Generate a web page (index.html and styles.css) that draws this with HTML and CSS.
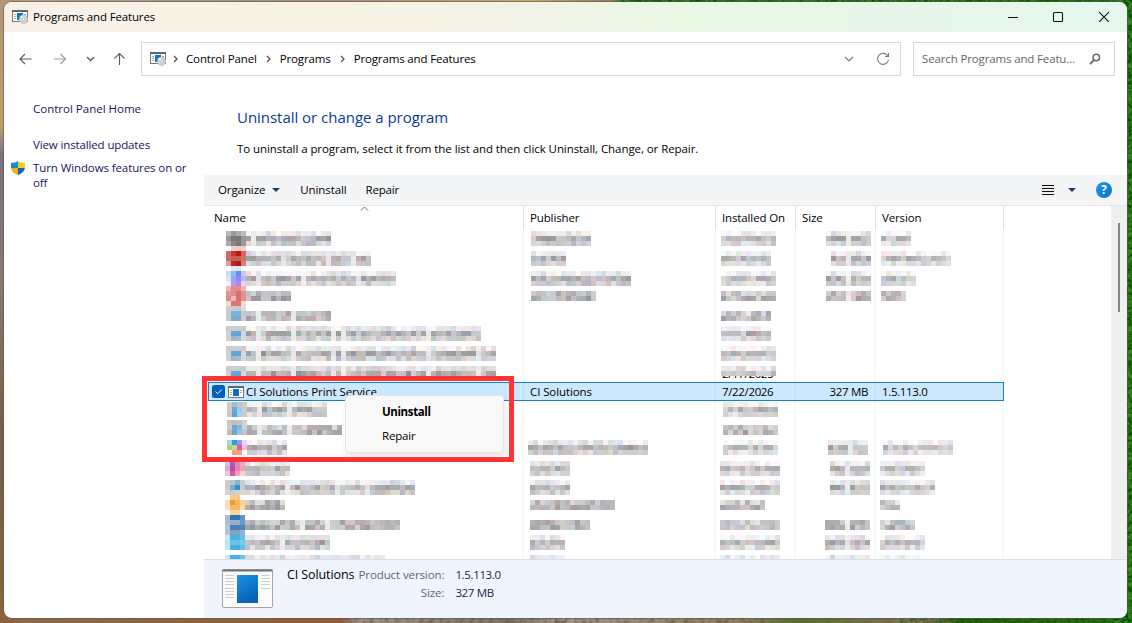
FILE: index.html
```html
<!DOCTYPE html>
<html lang="en">
<head>
<meta charset="utf-8">
<title>Programs and Features</title>
<link rel="stylesheet" href="styles.css">
</head>
<body>
<svg class="defs" width="0" height="0">
  <defs>
    <linearGradient id="blue" x1="0" y1="0" x2="0.4" y2="1"><stop offset="0" stop-color="#1b93e3"/><stop offset="1" stop-color="#0562b8"/></linearGradient>
    <symbol id="programs" viewBox="0 0 16 14">
      <rect x="0.5" y="0.5" width="15" height="11" fill="#fafafa" stroke="#777a7a"/>
      <path d="M0 1h16" stroke="#626666" stroke-width="2"/>
      <path d="M2 4.5h2M2 6.5h2M2 8.5h2M12 4.5h2" stroke="#aaa"/>
      <rect x="5" y="3" width="6" height="7" fill="#0b78cf"/>
      <circle cx="11.5" cy="9.3" r="4.3" fill="#cfd2d4" stroke="#aeb2b5" stroke-width=".5"/>
      <path d="M11.5 9.3L8 7.3A4 4 0 0 1 10.5 5.2z" fill="#f4f4f4"/>
      <circle cx="11.5" cy="9.3" r="1.2" fill="#fff" stroke="#999" stroke-width=".5"/>
    </symbol>
  </defs>
</svg>
<svg class="wallpaper" width="1132" height="623">
  <defs>
    <linearGradient id="ground" x1="0" x2="1"><stop offset="0" stop-color="#8b6b49"/><stop offset=".3" stop-color="#8f5d33"/><stop offset=".32" stop-color="#a0948a"/><stop offset=".45" stop-color="#7d7166"/><stop offset=".5" stop-color="#a2948a"/><stop offset=".66" stop-color="#8c7c5c"/><stop offset=".7" stop-color="#53712a"/><stop offset=".82" stop-color="#8d7358"/><stop offset=".85" stop-color="#2c6210"/><stop offset="1" stop-color="#2f7310"/></linearGradient>
    <linearGradient id="sky" x1="0" x2="1"><stop offset="0" stop-color="#bd9c83"/><stop offset=".15" stop-color="#a79685"/><stop offset=".3" stop-color="#a98f7d"/><stop offset=".47" stop-color="#caa46a"/><stop offset=".54" stop-color="#8d7f68"/><stop offset=".55" stop-color="#3d7c28"/><stop offset="1" stop-color="#2c761f"/></linearGradient>
    <linearGradient id="rock" x1="0" x2="0" y1="0" y2="1"><stop offset="0" stop-color="#b49575"/><stop offset=".2" stop-color="#c39c72"/><stop offset=".25" stop-color="#7b7180"/><stop offset=".45" stop-color="#8a7a70"/><stop offset=".7" stop-color="#7a5d45"/><stop offset="1" stop-color="#8c633e"/></linearGradient>
    <filter id="grain" x="0" y="0" width="100%" height="100%"><feTurbulence type="fractalNoise" baseFrequency="0.28" numOctaves="3" seed="4"/><feColorMatrix values="0 0 0 0 0  0 0 0 0 0.08  0 0 0 0 0  2.6 0 0 0 -0.9"/></filter>
    <filter id="dust" x="0" y="0" width="100%" height="100%"><feTurbulence type="fractalNoise" baseFrequency="0.2" numOctaves="3" seed="9"/><feColorMatrix values="0 0 0 0 0.15  0 0 0 0 0.1  0 0 0 0 0.05  2 0 0 0 -0.8"/></filter>
  </defs>
  <rect width="1132" height="10" fill="url(#sky)"/>
  <rect y="605" width="1132" height="18" fill="url(#ground)"/>
  <rect width="20" height="623" fill="url(#rock)"/>
  <rect x="1115" width="17" height="623" fill="#3c8420"/>
  <rect x="1115" width="17" height="623" filter="url(#grain)"/>
  <rect x="620" width="512" height="8" filter="url(#grain)"/>
  <rect x="340" y="612" width="560" height="11" filter="url(#dust)"/>
  <rect x="900" y="612" width="232" height="11" filter="url(#grain)" opacity=".7"/>
</svg>

<div class="window">
  <header class="titlebar">
    <svg class="app-icon" width="16" height="14"><use href="#programs"/></svg>
    <span class="title">Programs and Features</span>
    <svg class="caption" width="104" height="12" fill="none" stroke="#111" stroke-width="1.1"><path d="M0 6.5h10"/><rect x="45.5" y="1.5" width="9" height="9" rx="1"/><path d="M91.2 1.2l9.6 9.6M100.8 1.2l-9.6 9.6"/></svg>
  </header>

  <nav class="navbar">
    <svg class="arrows" width="108" height="14" fill="none" stroke="#5c5c5c" stroke-width="1.15"><path d="M12.5 7H1M6 2L1 7l5 5"/><path stroke="#9c9c9c" d="M35 7h11.5M41.500 2l5 5-5 5"/><path stroke-width="1.4" d="M68 5l3.600 3.600L75.200 5"/><path d="M100.500 13V1.500M95.300 6.700l5.200-5.200 5.200 5.200"/></svg>
    <div class="address">
      <svg width="16" height="14"><use href="#programs"/></svg>
      <svg class="chev" width="5" height="8"><path d="M1 1l3 3-3 3"/></svg><span>Control Panel</span>
      <svg class="chev" width="5" height="8"><path d="M1 1l3 3-3 3"/></svg><span>Programs</span>
      <svg class="chev" width="5" height="8"><path d="M1 1l3 3-3 3"/></svg><span>Programs and Features</span>
      <svg class="reload" width="46" height="14" fill="none" stroke="#7a7a7a" stroke-width="1.1"><path d="M1 5l4 4 4-4"/><path d="M44 4.300A5.500 5.500 0 1 0 44.500 8M44.500 1v3.500H41"/></svg>
    </div>
    <div class="search">
      <span>Search Programs and Featu...</span>
      <svg width="12" height="12" fill="none" stroke="#707070"><circle cx="7.300" cy="4.500" r="3.200" stroke-width="1.600"/><path d="M5 7L1 11" stroke-width="2"/></svg>
    </div>
  </nav>

  <div class="content">
    <aside class="sidebar">
      <a class="home">Control Panel Home</a>
      <a class="updates">View installed updates</a>
      <div class="feature">
        <svg width="14" height="14" viewBox="0 0 14 14"><clipPath id="sh"><path d="M7 0C5.200 1.500 2.500 1.800 0 1.900V6c0 4 3.500 6.600 7 8 3.500-1.400 7-4 7-8V1.900C11.500 1.800 8.800 1.500 7 0z"/></clipPath><g clip-path="url(#sh)"><path fill="#168ad8" d="M0 0h7v7H0z"/><path fill="#fccb0a" d="M7 0h7v7H7z"/><path fill="#f5ae08" d="M0 7h7v7H0z"/><path fill="#1169bd" d="M7 7h7v7H7z"/></g></svg>
        <a>Turn Windows features on or off</a>
      </div>
    </aside>
    <main class="main">
      <h1>Uninstall or change a program</h1>
      <p class="hint">To uninstall a program, select it from the list and then click Uninstall, Change, or Repair.</p>
      <div class="toolbar">
        <span>Organize</span><svg class="drop" width="8" height="4"><path d="M0 0h8L4 4z" fill="#1c3f6e"/></svg>
        <span class="cmd">Uninstall</span><span class="cmd2">Repair</span>
        <svg class="view" width="14" height="12"><rect width="14" height="12" fill="#efefef"/><path d="M1 1.500h12M1 4.500h12M1 7.500h12M1 10.500h12" stroke="#111"/></svg>
        <svg class="drop2" width="8" height="4"><path d="M0 0h8L4 4z" fill="#14396e"/></svg>
        <b class="help">?</b>
      </div>
      <section class="listing">
        <div class="table">
          <div class="head">
            <span class="c-name">Name<svg class="sort" width="9" height="5" fill="none" stroke="#6a6a6a"><path d="M1 4.500L4.500 1 8 4.500"/></svg></span><span>Publisher</span><span>Installed On</span><span>Size</span><span>Version</span>
          </div>
          <div class="rows" id="rows">
            <div class="row selected" id="selected">
              <div class="c-name">
                <svg width="13" height="13"><rect width="13" height="13" rx="2.500" fill="#005fb8"/><path d="M3.500 6.500l2.200 2.200 4-4.200" fill="none" stroke="#fff"/></svg>
                <svg class="item-icon" width="16" height="12"><rect x=".5" y=".5" width="15" height="11" fill="#fff" stroke="#777"/><path d="M0 1h16" stroke="#666" stroke-width="2"/><path d="M2 4.500h2M2 6.500h2M2 8.500h2M12 4.500h2M12 6.500h2" stroke="#aaa"/><rect x="5" y="3" width="6" height="7" fill="#0b72c9"/></svg>
                <span>CI Solutions Print Service</span>
              </div>
              <span>CI Solutions</span><span class="num">7/22/2026</span><span class="num size">327 MB</span><span class="num">1.5.113.0</span>
            </div>
          </div>
        </div>
        <div class="scrollbar"><div class="thumb"></div></div>
        <div class="menu"><b>Uninstall</b><span>Repair</span></div>
      </section>
      <footer class="details">
        <svg class="big" width="52" height="40"><rect x=".5" y=".5" width="50" height="38" rx="1.500" fill="#fbfbfb" stroke="#a3a5a6"/><path d="M.5 1.500h50" stroke="#707570" stroke-width="2"/><path d="M3 6.500h9M3 9.500h9M3 12.500h9M3 15.500h9M3 19.500h9M3 22.500h9M3 25.500h9M3 28.500h9M39 6.500h9M39 9.500h9M39 12.500h9M39 15.500h9M39 19.500h9" stroke="#cfcfcf"/><rect x="15" y="6" width="21" height="28" fill="url(#blue)"/></svg>
        <span class="vendor">CI Solutions</span>
        <dl><dt>Product version:</dt><dd>1.5.113.0</dd><dt>Size:</dt><dd>327 MB</dd></dl>
      </footer>
    </main>
  </div>
  <div class="highlight"></div>
</div>
<script src="rows.js"></script>
</body>
</html>
```
FILE: styles.css
```css
* { box-sizing: border-box; }
body {
  margin: 0; width: 1132px; height: 623px; overflow: hidden; position: relative;
  padding: 2px 0 0 4px; background: #7d6a55; color: #000;
  font: 11.5px/15px "Open Sans", "Noto Sans", sans-serif; letter-spacing: -0.1px;
}
svg { display: block; flex: none; }
.defs { position: absolute; }
.wallpaper { position: absolute; left: 0; top: 0; }
.window {
  position: relative; width: 1123px; height: 616px; border-radius: 8px; overflow: hidden;
  background: #fff; display: flex; flex-direction: column; box-shadow: 0 0 0 1px rgba(90, 85, 80, .55);
}

.titlebar {
  height: 30px; display: flex; align-items: center; padding: 0 18px 0 8px;
  background: linear-gradient(90deg, #f8f1e7 0, #f7f2e6 36%, #f1f3e6 47%, #e9f8e5 62%, #e7f5e8 78%, #e5f7ed 100%);
}
.title { margin-left: 5px; padding-bottom: 2px; letter-spacing: -0.14px; }
.caption { margin-left: auto; margin-right: -3px; }

.navbar { height: 54px; display: flex; align-items: center; padding: 0 12px 0 15px; }
.address { width: 760px; height: 34px; margin-left: 14px; border: 1px solid #d9d9d9; display: flex; align-items: center; padding: 0 10px 0 8px; }
.chev { fill: none; stroke: #555; stroke-width: 1.3; margin: 0 8px 0 9px; }
.chev:nth-of-type(2) { margin-left: 7px; }
.chev ~ .chev { margin-left: 9px; margin-right: 9px; }
.address span { padding-bottom: 2px; letter-spacing: -0.14px; }
.reload { margin-left: auto; }
.search { flex: none; margin-left: 12px; width: 202px; height: 34px; border: 1px solid #d9d9d9; display: flex; align-items: center; justify-content: space-between; padding: 0 13px 0 8px; color: #666; letter-spacing: -0.14px; }
.search span { padding-bottom: 2px; }

.content { flex: 1; display: flex; min-height: 0; }
.sidebar { width: 200px; padding: 15px 10px 0 29px; color: #151560; letter-spacing: -0.1px; }
.sidebar a { display: block; }
.home { letter-spacing: 0; margin-bottom: 21px; }
.updates { margin-bottom: 8px; letter-spacing: -0.13px; }
.feature { display: flex; gap: 8px; margin-left: -22px; }
.feature svg { margin-top: 1px; }
.feature a { width: 160px; }

.main { flex: 1; display: flex; flex-direction: column; min-width: 0; }
h1 { margin: 21px 0 0 33px; font: 15px/21px "Open Sans", sans-serif; letter-spacing: -0.03px; color: #0a3a9c; }
.hint { margin: 13px 0 19px 33px; line-height: 15px; letter-spacing: -0.07px; }
.toolbar { height: 31px; background: #f4f5f7; border-bottom: 1px solid #e5e5e6; display: flex; align-items: center; padding: 0 15px 0 14px; }
.toolbar span { padding-bottom: 2px; }
.drop { margin-left: 7px; }
.cmd { margin-left: 20px; }
.cmd2 { margin-left: 19px; letter-spacing: -0.2px; }
.view { margin-left: auto; }
.drop2 { margin: 0 20px 0 13px; }
.help { width: 16px; height: 16px; border-radius: 50%; background: linear-gradient(135deg, #229be8, #0671cd); color: #fff; line-height: 16px; text-align: center; }

.listing { position: relative; flex: none; width: 923px; height: 353px; display: flex; justify-content: space-between; overflow: hidden; }
.table { width: 800px; }
.head, .row { display: grid; grid-template-columns: 320px 192px 80px 80px 128px; }
.head { height: 24px; line-height: 24px; }
.head span { padding-left: 6px; border-right: 1px solid #e3e3e3; letter-spacing: -0.13px; }
.head .c-name { padding-left: 10px; position: relative; letter-spacing: -0.04px; }
.sort { position: absolute; left: 156px; top: 0; }
.row { height: 19px; }
.row > * { border-right: 1px solid #eef5fb; }
.mosaic { overflow: visible; }
.mosaic text { font-size: 11.5px; letter-spacing: -0.35px; }
.selected { margin-left: 4px; grid-template-columns: 316px 192px 80px 80px 128px; background: #cce8ff; box-shadow: inset 0 0 0 1px #1580d3; }
.selected > * { border-right-color: #b9dff9; padding-left: 6px; height: 17px; margin-top: 1px; line-height: 17px; }
.selected > :last-child { border-right-color: #1580d3; }
.selected .c-name { display: flex; align-items: center; padding-left: 4px; letter-spacing: -0.07px; }
.item-icon { margin: 0 2px 0 3px; }
.num { letter-spacing: -0.35px; }
.size { text-align: right; padding-right: 7px; }
.scrollbar { width: 16px; background: #efefef; padding: 17px 0 0 7px; }
.thumb { width: 2px; height: 89px; background: #858585; }

.menu { position: absolute; left: 141px; top: 189px; width: 159px; height: 58px; background: #f9f9f9; border: 1px solid #e6e6e6; border-radius: 4px; box-shadow: 2px 5px 9px rgba(0, 0, 0, .10); display: flex; flex-direction: column; padding: 4px 0 0 36px; line-height: 24px; }
.menu b { letter-spacing: -0.38px; }
.menu span { letter-spacing: -0.2px; }
.highlight { position: absolute; left: 198px; top: 374px; width: 312px; height: 86px; border: 5px solid #ff3434; }

.details { flex: 1; background: #f0f4fc; border-top: 1px solid #d3dfef; display: flex; padding: 9px 0 0 18px; }
.vendor { margin: -3px 0 0 13px; font-size: 12.5px; line-height: 17px; letter-spacing: -0.1px; }
dl { margin: -3px 0 0 4px; display: grid; grid-template-columns: 86px auto; column-gap: 11px; grid-auto-rows: 18px; align-content: start; line-height: 18px; }
dt { text-align: right; color: #5e6678; }
dd { margin: 0; color: #1c2844; letter-spacing: -0.35px; }
```
FILE: rows.js
```js
// Redacted entries, drawn as mosaics of 5px tiles.
// dx: tile grid shift, y: first tile line inside the row, n: tile lines,
// name / pub / date / ver: right edges, size: left edge, gaps: word breaks in the name,
// icon: tile colours, peek: value whose lower edge shows below the mosaic.
const blueIcon = ['ccc c8d0d4 c8d0d4 ccc', 'd0d0d0 62a8d8 5fa6d8 d6d6d6', 'd0d0d0 9bb8cf a2bdd4 d8d8d8'];
const entries = [
  {y:1,n:3,name:331,pub:591,date:776,size:826,ver:911,gaps:[251],icon:['bbb 999 aaa bbb','999 777 777 999','aaa 888 777 999']},
  {y:-3,n:4,name:371,pub:566,date:771,size:831,ver:951,skip:1,gaps:[281,326,351],icon:['fff f2cfcf f0caca f2d2d2','d06a66 c43830 b81a14 d46a64','d06a66 c8605a c8605a d46a64','dc9c98 b82820 b01a16 dc7c78']},
  {y:-2,n:4,name:396,pub:631,date:776,size:826,ver:916,skip:1,gaps:[256,301,356],icon:['fff e0e8fc dce6fc fff','c4e0f8 8abcf8 6a88f4 c8c8f8','d4e8fc 98a4f8 9488f4 bcb4f4','f4f4fc b09cf8 a48cf0 e0d8fc']},
  {y:-1,n:4,name:291,pub:596,date:776,size:826,ver:906,skip:1,dense:1,icon:['f4b4b4 e88c88 e88c88 f4b4b0','e49490 e08c88 d8706c e09490','e08c88 ecb8b4 d8706c e4908c','f8d8d8 e07470 dc7470 f8d8d4']},
  {y:0,n:3,name:331,date:771,skip:1,dense:1,gaps:[256,291],icon:['ccc ccc c8c8c8 ddd','c4ccd0 78b4e0 78b4e0 ccc','c8ccd0 84a8c8 84a8c8 ccc']},
  {y:1,n:3,name:481,date:771,gaps:[256,291,331,341,426],icon:blueIcon},
  {y:2,n:3,name:496,date:776,gaps:[256,291,331,341,426,476],icon:blueIcon},
  {y:3,n:2,name:496,date:776,gaps:[256,291,331,341,426,476],icon:blueIcon,peek:'2/17/2025'},
  null,
  {dx:1,y:1,n:3,name:327,date:778,gaps:[257,287],icon:['ccc a4bccc b4c8d8 ccc','ccc 6ca8d8 9cccf0 ccc','c8c8c8 5ca4dc a4d0f0 ccc']},
  {dx:1,y:0,n:3,name:340,date:778,skip:1,dense:1,gaps:[257,287],icon:['c4c4c4 c0c0c0 c4c4c4 d4d4d4','ccc 6cacdc 7cb8e8 c8d4dc','bbb 78a4c4 98c4e0 c4c4c4']},
  {dx:1,y:1,n:3,name:287,pub:648,date:778,size:828,ver:953,icon:['a0d8f4 309cd8 909ce8 e8d4f8','b4d070 c8d890 dc5ca8 f4bcd4','fff fc9c7c fca080 fff']},
  {y:3,n:3,name:286,pub:570,date:780,size:830,ver:925,icon:['d4c4dc a860bc e484b4 f4a4c4','e8a4d0 bc48ac ec80a8 f49cb8','ecc4dc d45cac f4a0b4 fcd4cc']},
  {y:3,n:3,name:411,pub:570,date:780,size:830,ver:935,gaps:[285,335,365],icon:['ccc b4c8d4 90b0c4 ccc','ccc 78acd0 3c8ccc ccc','d4d4d4 ccc c8d4dc d8d8d8']},
  {y:-1,n:4,name:285,pub:615,date:765,ver:900,skip:1,dense:1,icon:['fff fcc888 fcc888 fff','fcdcb0 f49830 f8b868 fcd090','fce0b8 f8b868 f8b868 fcd8a0','fff fcd8a0 fcd8a0 fff']},
  {y:0,n:4,name:398,pub:590,date:780,size:825,ver:915,skip:1,dense:1,gaps:[300,325],icon:['a4c0dc 3474b0 3474b0 5c94c4','a8c0dc 98acd0 98acd0 6898cc','b0c4dc 4c80b4 4c80b4 5484b4','b0c4d8 88a0c4 88a0c4 98b0d0']},
  {y:1,n:3,name:330,pub:565,date:780,size:825,ver:925,gaps:[280],icon:['c8e8f4 40b4e4 44b4e4 68c0e4','b8e4f4 70c0e4 6cbce4 7cc8e8','c4e8f8 44b4e4 44b0e0 64c0e8']},
  {y:2,n:1,name:385,pub:565,date:780,size:825,ver:920,gaps:[300],icon:['c8e8f4 40b4e4 40b4e4 68c0e4']}
];
const palette = [[0,0,0],[0,0,0],[-6,-8,4],[8,2,-4],[6,-5,-3],[-8,2,6],[-3,3,-3],[2,-2,6]];
function noise(a, b, c) {
  let h = (a * 374761393 + b * 668265263 + c * 2147483647) | 0;
  h = Math.imul(h ^ (h >>> 13), 1274126177);
  return ((h ^ (h >>> 16)) >>> 0) / 4294967296;
}
function tile(x, y, color) {
  return '<rect x="' + x + '" y="' + y + '" width="5" height="5" fill="' + color + '"/>';
}
function texture(from, to, origin, e, row, lift, gaps) {
  let out = '';
  const lines = e.dense || e.n === 2 ? 2 : Math.min(3, e.n);
  const start = e.dense ? 1 : e.skip ? 1 : 0;
  for (let x = from; x < to; x += 5) {
    const gap = gaps && gaps.some(g => Math.abs(g - x) < 3);
    for (let l = 0; l < lines; l++) {
      const r = noise(x, row, l + 1);
      let g = lines === 2 ? 150 + r * 58 + (l ? 0 : 14) : [216, 154, 190][l] + r * [34, 52, 38][l];
      if (e.n === 2) g = l ? 150 + r * 60 : 205 + r * 35;
      if (e.n === 1) g = 212 + r * 34;
      g += lift;
      if (gap) g = Math.max(g, 234);
      g = Math.min(250, g);
      const p = palette[Math.floor(noise(x, l, row + 31) * palette.length)];
      out += tile(x - origin, e.y + (start + l) * 5, 'rgb(' + p.map(v => Math.round(Math.min(255, g + v * 1.3))).join() + ')');
    }
  }
  return out;
}
const rows = document.getElementById('rows');
const selected = document.getElementById('selected');
entries.forEach((e, i) => {
  if (!e) return;
  const d = e.dx || 0;
  const iconX = i > 11 ? 225 : 226 + d;
  let name = '';
  e.icon.slice(0, e.n).forEach((line, l) => line.split(' ').forEach((c, k) => { name += tile(iconX + k * 5 - 204, e.y + l * 5, '#' + c); }));
  name += texture(iconX + 20, e.name, 204, e, i, 0, e.gaps);
  const dateX = i > 11 ? 720 : 721 + d * 2;
  const peek = e.peek ? '<text x="6" y="15">' + e.peek + '</text><rect x="4" width="60" height="13" fill="#fff"/>' : '';
  const cells = [
    name,
    e.pub ? texture(i > 11 ? 530 : i === 11 ? 528 : 531, e.pub, 524, e, i + 40, 0) : '',
    peek + texture(dateX, e.date, 716, e, i + 80, 10),
    e.size ? texture(e.size, i > 8 ? (i === 11 ? 868 : 870) : 871, 796, e, i + 120, 0, [i > 11 ? 845 : 846]) : '',
    e.ver ? texture(i > 11 ? 880 : i === 11 ? 883 : 881, e.ver, 876, e, i + 160, 12) : ''
  ];
  const row = document.createElement('div');
  row.className = 'row';
  row.innerHTML = cells.map(c => '<div><svg class="mosaic" width="1" height="19" shape-rendering="crispEdges">' + c + '</svg></div>').join('');
  if (i < 8) rows.insertBefore(row, selected); else rows.appendChild(row);
});
```
